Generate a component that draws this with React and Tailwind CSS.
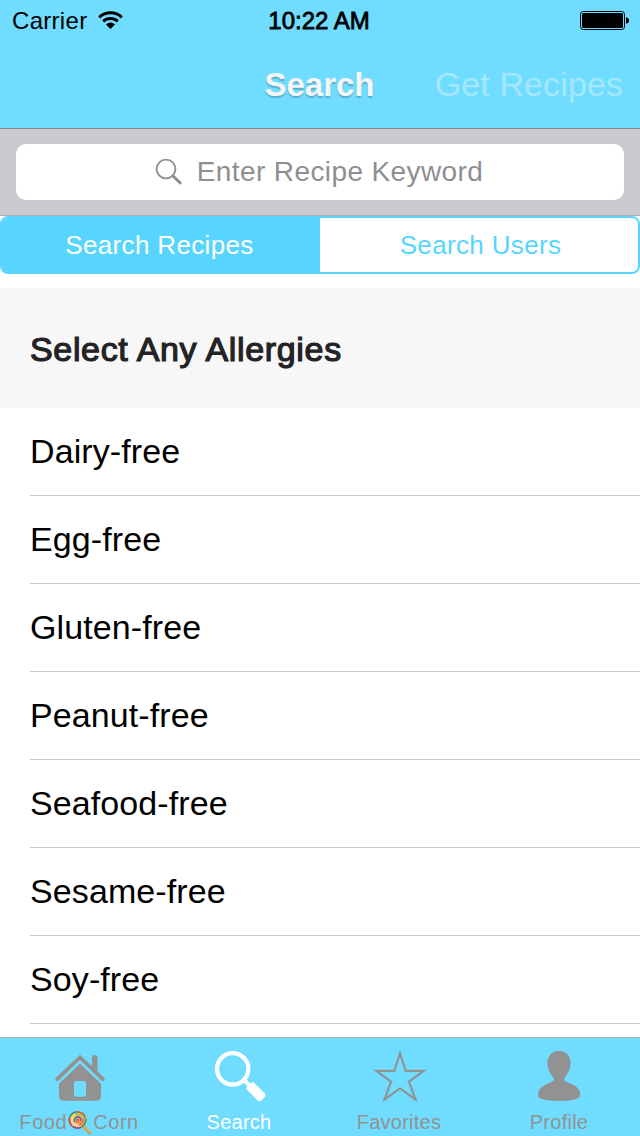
const allergies = [
  'Dairy-free',
  'Egg-free',
  'Gluten-free',
  'Peanut-free',
  'Seafood-free',
  'Sesame-free',
  'Soy-free',
];

function StatusBar() {
  return (
    <div className="grid h-10 grid-cols-3 items-center pr-[11px] pl-3 text-2xl leading-10 text-black">
      <div className="flex items-center gap-[11px]">
        <span className="pt-0.5 leading-[38px] tracking-[0.3px]">Carrier</span>
        <svg width="25" height="19" viewBox="0 0 25 19" fill="none" stroke="#000">
          <path d="M1.2 6.3a16.5 16.5 0 0 1 22.6 0" strokeWidth="3" />
          <path d="M5.2 10.4a10.7 10.7 0 0 1 14.6 0" strokeWidth="2.9" />
          <path d="M8 13.4a6.5 6.5 0 0 1 9 0L12.5 18z" fill="#000" stroke="none" />
        </svg>
      </div>
      <span className="pt-0.5 pr-[3px] text-center leading-[38px] [-webkit-text-stroke:0.8px_black]">10:22 AM</span>
      <svg className="justify-self-end" width="49" height="19" viewBox="0 0 49 19">
        <rect x="0.5" y="0.5" width="44" height="18" rx="2.8" fill="none" stroke="#000" />
        <rect x="2" y="2" width="41" height="15" rx="1.5" />
        <path d="M46 6.2q3 .6 3 3.3t-3 3.3z" />
      </svg>
    </div>
  );
}

function HomeIcon() {
  return (
    <svg width="52" height="48" viewBox="0 0 52 48" fill="#929292">
      <path d="M3.2 25.2 26 3.400 48.800 25.200" fill="none" stroke="#929292" strokeWidth="3.800" strokeLinecap="round" />
      <path d="M38 2.800Q38 1 40.700 1T43.500 2.800V19L38 13.500z" />
      <path
        fillRule="evenodd"
        d="M26 9.500 47 29.800V42Q47 46.800 42 46.800H10Q5 46.800 5 42V29.800zM22 27Q20 27 20 29V40.500Q20 42.800 22 42.800H30Q32 42.800 32 40.500V29Q32 27 30 27z"
      />
    </svg>
  );
}

function SearchTabIcon() {
  return (
    <svg width="52" height="52" viewBox="0 0 52 52" fill="none" stroke="#fff">
      <circle cx="18.700" cy="18.800" r="15.700" strokeWidth="4.300" />
      <path d="m29 29 8 8" strokeWidth="4" />
      <rect x="32" y="36.700" width="20" height="10" rx="3" fill="#fff" stroke="none" transform="rotate(45 42 41.700)" />
    </svg>
  );
}

function StarIcon() {
  return (
    <svg width="54" height="52" viewBox="0 0 54 52" fill="none">
      <path
        d="M27 3.300 32.700 20.900H50.700L36 31.600 42.500 49.600 27 38.400 11.500 49.600 18 31.600 3.300 20.900H21.300z"
        stroke="#929292"
        strokeWidth="2.100"
      />
    </svg>
  );
}

function ProfileIcon() {
  return (
    <svg width="44" height="50" viewBox="0 0 44 50" fill="#929292">
      <path d="M22 0C29 0 33.500 4.500 33.500 12c0 6.500-3 11-5.700 14.500-1.200 2.200-.7 3 1.100 4.200C36 33 43.200 36.500 43.200 43c0 2.500-.8 3.500-3 4.500C35.500 49.300 29 50 22 50s-13-.5-18-2.200c-2.500-1-3-2.300-3-4.300 0-7 8-10.500 14-12.800 2-.9 2.700-2.200 1.300-4.200C13.500 23 10.500 18.500 10.500 12 10.500 4.500 15 0 22 0z" />
    </svg>
  );
}

function Lollipop() {
  return (
    <svg className="-my-1 ml-px" width="25" height="25" viewBox="0 0 25 25" fill="none" strokeLinecap="round">
      <path d="m15 16 6.800 7" stroke="#d99336" strokeWidth="2.600" />
      <path d="m15.400 16 6.600 6.500" stroke="#f7d36b" strokeWidth="1" />
      <circle cx="9.500" cy="10" r="9" fill="#f0c070" />
      <path d="M1.700 7A8.500 8.500 0 0 1 9.500 1.800" stroke="#3d8f9c" strokeWidth="1.700" />
      <path d="M9.500 1.800A8.500 8.500 0 0 1 17 7" stroke="#c8643a" strokeWidth="1.700" />
      <path d="M17.700 9A8.500 8.500 0 0 1 14 16.500" stroke="#4d9447" strokeWidth="1.700" />
      <path d="M12.500 17.500A8.500 8.500 0 0 1 5 16.800" stroke="#7d4aa5" strokeWidth="1.700" />
      <path d="M3.500 15.500A8.500 8.500 0 0 1 1.400 8.500" stroke="#c7453e" strokeWidth="1.700" />
      <path d="M4 11Q3.800 5.500 8 4.300" stroke="#f4e35c" strokeWidth="1.800" />
      <path d="M8 4.300Q13 3.200 15 8" stroke="#8fce60" strokeWidth="1.800" />
      <path d="M15.200 9Q15.200 13.500 11 15" stroke="#e8635a" strokeWidth="1.600" />
      <path d="M10 15.200Q5.500 15 4 11.500" stroke="#f3cfe0" strokeWidth="1.800" />
      <path d="M6.500 11.500Q5.800 7.500 9.500 6.700" stroke="#3277bd" strokeWidth="1.500" />
      <path d="M9.500 6.700Q13 6.800 12.800 10.500" stroke="#7b4bb0" strokeWidth="1.500" />
      <path d="M12.500 11.500Q10 14 7.300 12.200" stroke="#f08b35" strokeWidth="1.500" />
      <path d="M8.800 10.800Q8.500 9 10 9.200T10 11.300" stroke="#d8483f" strokeWidth="1.200" />
    </svg>
  );
}

function Tab({ icon, active, children }) {
  return (
    <div
      className={
        'flex flex-1 flex-col items-center text-xl leading-6 tracking-[0.25px] ' +
        (active ? 'text-white' : 'text-[#929292]')
      }
    >
      <div className="flex h-[72px] flex-col items-center pt-3">{icon}</div>
      <div className="flex h-6 items-center pr-[2px]">{children}</div>
    </div>
  );
}

export default function App() {
  return (
    <div className="flex h-[1136px] w-[640px] flex-col overflow-hidden bg-white font-['Liberation_Sans',Arial,sans-serif]">
      <header className="h-[129px] shrink-0 border-b border-[#7f8588] bg-[#70dcff]">
        <StatusBar />
        <div className="grid h-[88px] grid-cols-[1fr_auto_1fr] items-center pr-[17px] text-[34px] leading-10">
          <span />
          <h1 className="pt-0.5 pl-4 text-[33px] leading-[38px] font-bold text-[#f5f5f5] [text-shadow:0_2px_1px_rgba(0,0,0,0.2)]">
            Search
          </h1>
          <span className="text-right tracking-[0.1px] whitespace-nowrap text-[#a3e8ff]">Get Recipes</span>
        </div>
      </header>

      <div className="h-[87px] shrink-0 border-b border-[#aeaeb2] bg-[#c9c9ce] px-4 pt-[15px]">
        <div className="flex h-14 items-center justify-center gap-[14px] rounded-[10px] bg-white pr-0.5 text-[28px] text-[#8e8e93]">
          <svg width="28" height="28" viewBox="0 0 28 28" fill="none" stroke="#8e8e93">
            <circle cx="11" cy="11" r="9.400" strokeWidth="1.900" />
            <path d="m17.500 17.500 8.500 8.300" strokeWidth="2.900" />
          </svg>
          <span className="tracking-[0.4px]">Enter Recipe Keyword</span>
        </div>
      </div>

      <div className="flex h-[58px] shrink-0 overflow-hidden rounded-lg border-2 border-[#58d5ff] text-[26px] tracking-[0.35px]">
        <div className="flex flex-1 items-center justify-center bg-[#58d5ff] pr-[3px] text-white">Search Recipes</div>
        <div className="flex flex-1 items-center justify-center pl-[3px] text-[#58d5ff]">Search Users</div>
      </div>

      <h2 className="mt-[14px] flex h-[120px] shrink-0 items-center bg-[#f7f7f7] pt-[3px] pl-[30px] text-[34px] font-normal tracking-[0.66px] text-[#232325] [-webkit-text-stroke:1.2px_#232325]">
        Select Any Allergies
      </h2>

      <ul className="min-h-0 flex-1 overflow-hidden pl-[30px]">
        {allergies.map((name) => (
          <li
            key={name}
            className="flex h-[88px] items-center border-b border-[#c8c7cc] text-[34px] tracking-[0.1px] text-black"
          >
            {name}
          </li>
        ))}
      </ul>

      <nav className="flex h-[99px] shrink-0 border-t border-[#a9adb0] bg-[#70dcff]">
        <Tab icon={<div className="pt-1"><HomeIcon /></div>}>
          <span className="tracking-[0.6px]">Food</span>
          <Lollipop />
          <span className="tracking-[0.5px]">Corn</span>
        </Tab>
        <Tab icon={<SearchTabIcon />} active>Search</Tab>
        <Tab icon={<StarIcon />}>Favorites</Tab>
        <Tab icon={<div className="pt-px pr-[3px]"><ProfileIcon /></div>}>Profile</Tab>
      </nav>
    </div>
  );
}
